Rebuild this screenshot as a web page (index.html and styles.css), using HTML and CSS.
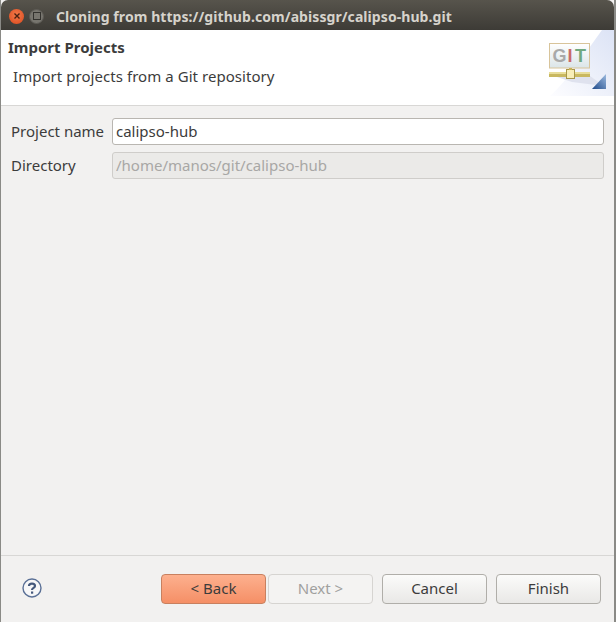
FILE: index.html
```html
<!DOCTYPE html>
<html lang="en">
<head>
  <meta charset="UTF-8">
  <title>Cloning from https://github.com/abissgr/calipso-hub.git</title>
  <link rel="stylesheet" href="styles.css">
</head>
<body>
  <div class="window">
    <header class="titlebar">
      <span class="win-btn win-close">
        <svg width="8" height="8" viewBox="0 0 8 8"><path d="M1.500 1.500L6.500 6.500M6.500 1.500L1.500 6.500" stroke="#4a2010" stroke-width="1.400"/></svg>
      </span>
      <span class="win-btn win-max"><span class="win-max-box"></span></span>
      <span class="title-text">Cloning from https://github.com/abissgr/calipso-hub.git</span>
    </header>

    <section class="banner">
      <div class="banner-text">
        <div class="banner-title">Import Projects</div>
        <div class="banner-sub">Import projects from a Git repository</div>
      </div>
      <div class="banner-art">
        <svg width="66" height="66" viewBox="0 0 66 66">
          <defs>
            <linearGradient id="fade" x1="0" y1="1" x2="1" y2="0">
              <stop offset="0" stop-color="#fdfdff"/>
              <stop offset="1" stop-color="#dce3f5"/>
            </linearGradient>
            <linearGradient id="tri" x1="0" y1="1" x2="1" y2="0">
              <stop offset="0" stop-color="#1f4a8a"/>
              <stop offset="1" stop-color="#9dbbe0"/>
            </linearGradient>
            <linearGradient id="plate" x1="0" y1="0" x2="0" y2="1">
              <stop offset="0" stop-color="#ffffff"/>
              <stop offset="1" stop-color="#dbe5e8"/>
            </linearGradient>
          </defs>
          <path d="M2 66C20 50 38 22 54 0H66V66Z" fill="url(#fade)"/>
          <rect x="1.500" y="13.500" width="40" height="24.500" fill="url(#plate)" stroke="#d8c49a"/>
          <path d="M6 46H42L56 56L24 52Z" fill="#dfe2ee"/>
          <rect x="1" y="42" width="41" height="2" fill="#e8dd9a"/>
          <rect x="1" y="44" width="41" height="3" fill="#c9b860"/>
          <rect x="18.500" y="39.500" width="8" height="9" fill="#f8eeb8" stroke="#a8974a"/>
          <rect x="21" y="38" width="3" height="2" fill="#c9b45c"/>
          <path d="M44 59L58 44V59Z" fill="url(#tri)"/>
          <text x="4.500" y="32" class="git-g">G</text>
          <text x="19.500" y="32" class="git-i">I</text>
          <text x="27" y="32" class="git-t">T</text>
        </svg>
      </div>
    </section>

    <main class="content">
      <div class="form-row">
        <label class="form-label" for="project-name">Project name</label>
        <input class="form-input" type="text" id="project-name" value="calipso-hub">
      </div>
      <div class="form-row">
        <label class="form-label" for="directory">Directory</label>
        <input class="form-input" type="text" id="directory" value="/home/manos/git/calipso-hub" disabled>
      </div>
    </main>

    <footer class="footer">
      <svg class="help-icon" width="20" height="20" viewBox="0 0 20 20">
        <circle cx="10" cy="10" r="9" fill="#f7f7f8" stroke="#5a7096" stroke-width="1.400"/>
        <path d="M7 8C7 4.800 13 4.800 13 8C13 10 10 9.800 10 12" fill="none" stroke="#44587c" stroke-width="2.200"/>
        <rect x="9" y="13.500" width="2.200" height="2.200" fill="#44587c"/>
      </svg>
      <div class="buttons">
        <div class="button-pair">
          <button class="btn btn-active">&lt; Back</button>
          <button class="btn" disabled>Next &gt;</button>
        </div>
        <button class="btn">Cancel</button>
        <button class="btn">Finish</button>
      </div>
    </footer>
  </div>
</body>
</html>
```

FILE: styles.css
```css
body {
  margin: 0;
  background-color: #f0f0ee;
  font-family: "Noto Sans", sans-serif;
  font-size: 15px;
  color: #3c3c3c;
}

.window {
  width: 613px;
  height: 622px;
  box-sizing: content-box;
  display: flex;
  flex-direction: column;
  background-color: #f2f1f0;
  border-left: 1px solid #8a8a86;
  border-right: 2px solid #8a8a86;
}

.titlebar {
  height: 30px;
  display: flex;
  align-items: center;
  box-sizing: border-box;
  padding: 2px 0 0 8px;
  background: linear-gradient(#57544c, #3d3b36);
  border-radius: 7px 7px 0 0;
}

.win-btn {
  width: 15px;
  height: 15px;
  border-radius: 50%;
  display: flex;
  align-items: center;
  justify-content: center;
}

.win-close {
  background: radial-gradient(circle at 50% 40%, #f47a4a, #d9481c);
  margin-right: 5px;
}

.win-max {
  background: #77756e;
  border: 1px solid #5c5a54;
  box-sizing: border-box;
}

.win-max-box {
  width: 6px;
  height: 6px;
  border: 1px solid #33322e;
}

.title-text {
  margin-left: 12px;
  font-size: 14px;
  font-weight: 700;
  color: #d6d3cc;
  letter-spacing: 0.07px;
}

.banner {
  height: 75px;
  display: flex;
  justify-content: space-between;
  background-color: #fff;
  border-bottom: 1px solid #d8d7d5;
}

.banner-title {
  margin: 8px 0 0 7px;
  font-size: 15px;
  line-height: 18px;
  font-weight: 700;
}

.banner-sub {
  margin: 10px 0 0 12px;
  font-size: 15px;
  line-height: 20px;
  letter-spacing: 0.05px;
}

.banner-art {
  height: 66px;
}

.git-g, .git-i, .git-t {
  font-family: "Liberation Sans", sans-serif;
  font-size: 18px;
  font-weight: 700;
}

.git-g { fill: #a9a9a9; }
.git-i { fill: #c96a6a; }
.git-t { fill: #6fa87f; }

.content {
  flex: 1;
  padding: 12px 10px 0 10px;
  border-bottom: 1px solid #d8d7d5;
}

.form-row {
  display: flex;
  align-items: center;
  margin-bottom: 7px;
}

.form-label {
  width: 101px;
  padding-bottom: 2px;
}

.form-input {
  flex: 1;
  height: 27px;
  box-sizing: border-box;
  padding: 0 3px 1px;
  border: 1px solid #b9b6b1;
  border-radius: 3px;
  background-color: #fff;
  font-family: inherit;
  font-size: 15px;
  color: #3c3c3c;
}

.form-input:disabled {
  background-color: #ebeae8;
  border-color: #cfcdca;
  color: #a8a7a5;
}

.footer {
  height: 66px;
  box-sizing: border-box;
  display: flex;
  align-items: center;
  justify-content: space-between;
  padding: 0 13px 2px 21px;
}

.buttons {
  display: flex;
  gap: 9px;
  margin-top: 2px;
}

.button-pair {
  display: flex;
  gap: 2px;
}

.btn {
  width: 105px;
  height: 30px;
  padding: 0 0 2px;
  border: 1px solid #b0aea9;
  border-radius: 4px;
  background: linear-gradient(#fbfbfa, #e9e8e6);
  font-family: inherit;
  font-size: 15px;
  color: #3c3c3c;
}

.btn:disabled {
  border-color: #d6d4d1;
  background: #f4f3f2;
  color: #a0a09e;
}

.btn-active {
  border-color: #c8805f;
  background: linear-gradient(#fdb08e, #f58f66);
}
```
